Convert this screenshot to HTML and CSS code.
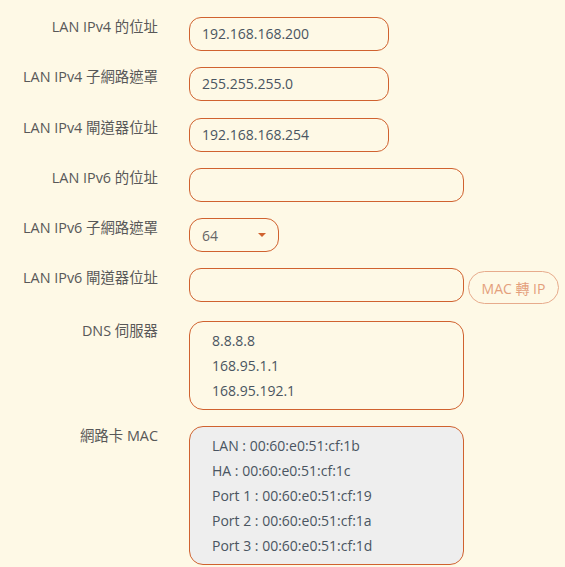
FILE: index.html
```html
<!DOCTYPE html>
<html lang="zh-Hant">
<head>
<meta charset="utf-8">
<link rel="stylesheet" href="styles.css">
</head>
<body>
<div class="form">
  <div class="row">
    <div class="label">LAN IPv4 的位址</div>
    <div class="field"><div class="input">192.168.168.200</div></div>
  </div>
  <div class="row">
    <div class="label">LAN IPv4 子網路遮罩</div>
    <div class="field"><div class="input">255.255.255.0</div></div>
  </div>
  <div class="row">
    <div class="label">LAN IPv4 閘道器位址</div>
    <div class="field"><div class="input">192.168.168.254</div></div>
  </div>
  <div class="row">
    <div class="label">LAN IPv6 的位址</div>
    <div class="field"><div class="input wide"></div></div>
  </div>
  <div class="row">
    <div class="label">LAN IPv6 子網路遮罩</div>
    <div class="field"><div class="select"><span>64</span><span class="caret"></span></div></div>
  </div>
  <div class="row">
    <div class="label">LAN IPv6 閘道器位址</div>
    <div class="field"><div class="input wide"></div><div class="btn">MAC 轉 IP</div></div>
  </div>
  <div class="row">
    <div class="label">DNS 伺服器</div>
    <div class="field">
      <div class="area">
        <div>8.8.8.8</div>
        <div>168.95.1.1</div>
        <div>168.95.192.1</div>
      </div>
    </div>
  </div>
  <div class="row">
    <div class="label">網路卡 MAC</div>
    <div class="field">
      <div class="area grey">
        <div>LAN : 00:60:e0:51:cf:1b</div>
        <div>HA : 00:60:e0:51:cf:1c</div>
        <div>Port 1 : 00:60:e0:51:cf:19</div>
        <div>Port 2 : 00:60:e0:51:cf:1a</div>
        <div>Port 3 : 00:60:e0:51:cf:1d</div>
      </div>
    </div>
  </div>
</div>
</body>
</html>
```
FILE: styles.css
```css
html, body {
  margin: 0;
  padding: 0;
  background: #fef9e6;
  font-family: "Open Sans", "Noto Sans CJK TC", sans-serif;
  font-size: 14px;
}
.form {
  display: flex;
  flex-direction: column;
  gap: 16.3px;
  padding-top: 17px;
}
.row {
  display: grid;
  grid-template-columns: 158px auto;
  column-gap: 31px;
  align-items: start;
}
.label {
  text-align: right;
  color: #585858;
  font-size: 14.4px;
  line-height: 20px;
  white-space: nowrap;
}
.field {
  display: flex;
  align-items: flex-start;
}
.input, .select, .area {
  box-sizing: border-box;
  border: 1px solid #d0622f;
  color: #4a5561;
  background: transparent;
}
.input {
  width: 200px;
  height: 34px;
  border-radius: 12px;
  padding: 0 12px;
  line-height: 32px;
}
.input.wide {
  width: 275px;
}
.select {
  width: 90px;
  height: 34px;
  border-radius: 13px;
  padding: 0 10px 0 12px;
  display: flex;
  align-items: center;
  justify-content: space-between;
  color: #666;
}
.caret {
  width: 0;
  height: 0;
  border-left: 4px solid transparent;
  border-right: 4px solid transparent;
  border-top: 4px solid #d0622f;
  margin-right: 2px;
}
.btn {
  box-sizing: border-box;
  margin-left: 4px;
  margin-top: 3px;
  width: 91px;
  height: 33px;
  border: 1px solid #e7ab8c;
  border-radius: 17px;
  color: #e49f7c;
  display: flex;
  align-items: center;
  justify-content: center;
}
.area {
  width: 275px;
  border-radius: 14px;
  padding: 6px 22px;
  line-height: 25px;
}
.area.grey {
  background: #eeeeee;
}
```
